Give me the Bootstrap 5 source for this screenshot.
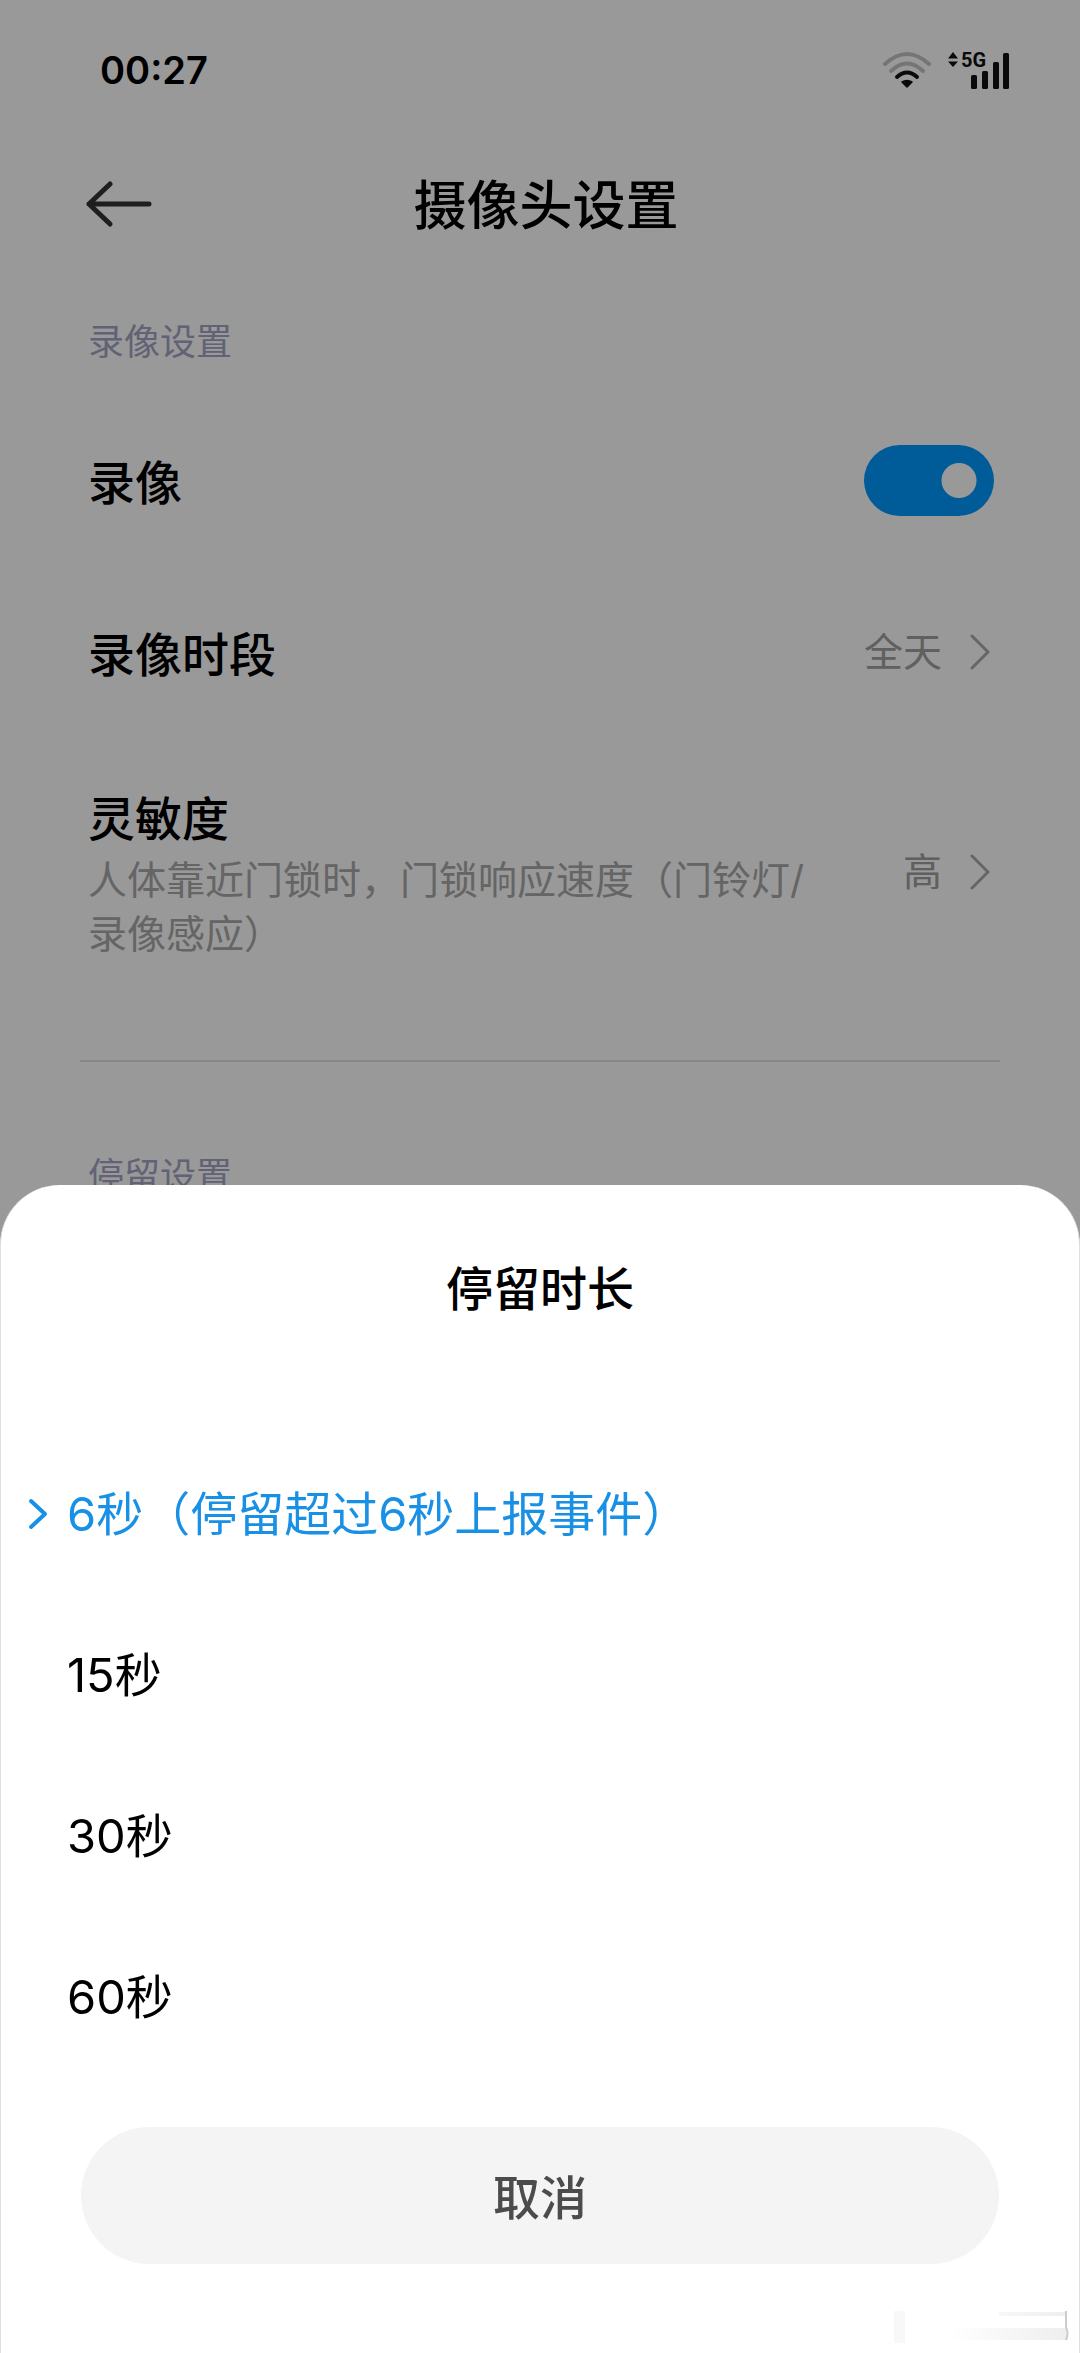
<!DOCTYPE html>
<html lang="zh-CN">
<head>
<meta charset="utf-8">
<meta name="viewport" content="width=device-width, initial-scale=1">
<title>摄像头设置</title>
<link href="https://cdn.jsdelivr.net/npm/bootstrap@5.3.0/dist/css/bootstrap.min.css" rel="stylesheet">
<style>
  body { font-family: Inter, "Noto Sans CJK SC", sans-serif; color: #000; background: #fff; min-height: 100vh; }
  .status-bar { height: 140px; padding: 0 70px 0 100px; }
  .clock { font-size: 38px; line-height: 48px; font-weight: 600; }
  .title-bar { height: 128px; padding: 0 74px 0 86px; }
  .title-bar .side { width: 66px; }
  .page-title { font-size: 53px; line-height: 64px; font-weight: 500; padding-top: 4px; }
  .settings { padding: 0 86px 0 88px; }
  .section-label { font-size: 36px; line-height: 48px; color: #a2a4c4; font-weight: 400; }
  .section-label.first { padding: 50px 0 28px; }
  .setting-row { min-height: 172px; color: #000; }
  .setting-row.tall { height: 268px; min-height: 0; }
  .setting-name { font-size: 47px; line-height: 60px; font-weight: 500; padding-top: 6px; }
  .setting-desc { font-size: 39px; line-height: 54px; color: #a8a8a8; padding-top: 4px; padding-right: 80px; }
  .setting-value { font-size: 39px; line-height: 54px; color: #a0a0a0; gap: 28px; padding-right: 4px; }
  .form-switch .big-switch { width: 130px; height: 71px; margin: 0; border: 0; border-radius: 36px; background-color: #09f;
    background-image: radial-gradient(circle at calc(100% - 35px) 50%, #fff 17px, transparent 18px); }
  .rule { height: 2px; background: #e2e2e2; margin: 54px -6px 90px -8px; }
  .dim { background: rgba(0,0,0,.4); z-index: 1040; }
  .offcanvas.sheet { height: auto; max-height: 100%; border: 1px solid #e0e0e0; border-width: 0 1px; border-radius: 60px 60px 0 0; background: #fff; color: #000; }
  .sheet-title { font-size: 47px; line-height: 62px; font-weight: 500; padding: 73px 0 114px; }
  .choice { height: 161px; font-size: 47px; padding: 0 68px 0 26px; gap: 16px; color: #000; }
  .choice .tick { width: 24px; }
  .choice.chosen { color: #1890e6; }
  .sheet-foot { padding: 49px 80px 89px; }
  .cancel { height: 137px; border-radius: 69px; background: #f4f4f4; color: #4c4c4c; font-size: 47px; font-weight: 500; padding: 6px 0 0; }
  .smudge { right: 10px; bottom: 8px; }
</style>
<script src="https://cdn.jsdelivr.net/npm/bootstrap@5.3.0/dist/js/bootstrap.bundle.min.js"></script>
</head>
<body>
<header>
  <div class="status-bar d-flex align-items-center justify-content-between">
    <span class="clock">00:27</span>
    <div class="d-flex align-items-center gap-3">
      <svg width="50" height="38" viewBox="0 0 50 38" fill="none" stroke-width="4" stroke-linecap="round" aria-label="Wi-Fi">
        <path d="M3 13Q25-7 47 13" stroke="#c4c4c4"/>
        <path d="M9 20Q25 5 41 20" stroke="#c4c4c4"/>
        <path d="M15 26Q25 17 35 26" stroke="#111"/>
        <path d="M20 31Q25 28 30 31L25 36Z" fill="#111" stroke="#111" stroke-width="1.500" stroke-linejoin="round"/>
      </svg>
      <svg width="62" height="54" viewBox="0 -8 62 54" fill="#111" aria-label="5G">
        <path d="M0 7.500L5 1L10 7.500ZM0 10.500H10L5 16Z"/>
        <text x="13" y="16" font-family="Roboto, sans-serif" font-size="20" font-weight="700">5G</text>
        <rect x="23" y="24" width="6" height="14" rx="1.500"/><rect x="34" y="20" width="6" height="18" rx="1.500"/>
        <rect x="45" y="11" width="6" height="27" rx="1.500"/><rect x="55" y="2" width="6" height="36" rx="1.500"/>
      </svg>
    </div>
  </div>
  <div class="title-bar d-flex align-items-center justify-content-between">
    <button type="button" class="side btn p-0 border-0 text-start lh-1" aria-label="返回">
      <svg width="66" height="46" viewBox="0 0 66 46" fill="none" stroke="#333" stroke-width="5" stroke-linecap="round" stroke-linejoin="round"><path d="M63 23H3M24 3L3 23L24 43"/></svg>
    </button>
    <h1 class="page-title m-0">摄像头设置</h1>
    <span class="side"></span>
  </div>
</header>

<main class="settings">
  <h2 class="section-label first m-0">录像设置</h2>
  <div class="setting-row form-switch p-0 d-flex align-items-center justify-content-between">
    <label class="setting-name" for="rec">录像</label>
    <input class="form-check-input big-switch" type="checkbox" role="switch" id="rec" checked>
  </div>
  <a href="#" class="setting-row d-flex align-items-center justify-content-between text-decoration-none">
    <span class="setting-name">录像时段</span>
    <span class="setting-value d-flex align-items-center">全天
      <svg width="20" height="36" viewBox="0 0 20 36" fill="none" stroke="#aaa" stroke-width="3" stroke-linecap="round" stroke-linejoin="round"><path d="M2 2L18 18L2 34"/></svg>
    </span>
  </a>
  <a href="#" class="setting-row tall d-flex align-items-center justify-content-between text-decoration-none">
    <span class="d-flex flex-column">
      <span class="setting-name">灵敏度</span>
      <span class="setting-desc">人体靠近门锁时，门锁响应速度（门铃灯/录像感应）</span>
    </span>
    <span class="setting-value d-flex align-items-center flex-shrink-0">高
      <svg width="20" height="36" viewBox="0 0 20 36" fill="none" stroke="#aaa" stroke-width="3" stroke-linecap="round" stroke-linejoin="round"><path d="M2 2L18 18L2 34"/></svg>
    </span>
  </a>
  <div class="rule"></div>
  <h2 class="section-label m-0">停留设置</h2>
</main>

<div class="dim position-fixed top-0 start-0 w-100 h-100"></div>

<section class="sheet offcanvas offcanvas-bottom show" data-bs-backdrop="false" tabindex="-1" role="dialog" aria-labelledby="sheetTitle">
  <h2 class="sheet-title text-center m-0" id="sheetTitle">停留时长</h2>
  <div class="d-flex flex-column">
    <button type="button" class="choice chosen btn border-0 rounded-0 d-flex align-items-center text-start" aria-pressed="true">
      <svg class="tick" width="24" height="36" viewBox="0 0 24 36" fill="none" stroke="#1890e6" stroke-width="4" stroke-linecap="round" stroke-linejoin="round"><path d="M4 4L18 17L4 30"/></svg>
      <span>6秒（停留超过6秒上报事件）</span>
    </button>
    <button type="button" class="choice btn border-0 rounded-0 d-flex align-items-center text-start"><span class="tick"></span><span>15秒</span></button>
    <button type="button" class="choice btn border-0 rounded-0 d-flex align-items-center text-start"><span class="tick"></span><span>30秒</span></button>
    <button type="button" class="choice btn border-0 rounded-0 d-flex align-items-center text-start"><span class="tick"></span><span>60秒</span></button>
  </div>
  <div class="sheet-foot">
    <button type="button" class="cancel btn border-0 w-100">取消</button>
  </div>
  <svg class="smudge position-absolute" width="180" height="42" viewBox="0 0 180 42" aria-hidden="true">
    <defs><linearGradient id="fade"><stop offset="0" stop-color="#fff"/><stop offset="1" stop-color="#eee"/></linearGradient></defs>
    <path d="M5 8H16V40H5Z" fill="#f8f8f8"/>
    <path d="M110 9H177V13H110ZM60 25H177V37H60Z" fill="url(#fade)"/>
    <path d="M177 8V24Q180 30 177 37" fill="none" stroke="#ccc" stroke-width="2"/>
  </svg>
</section>
</body>
</html>
